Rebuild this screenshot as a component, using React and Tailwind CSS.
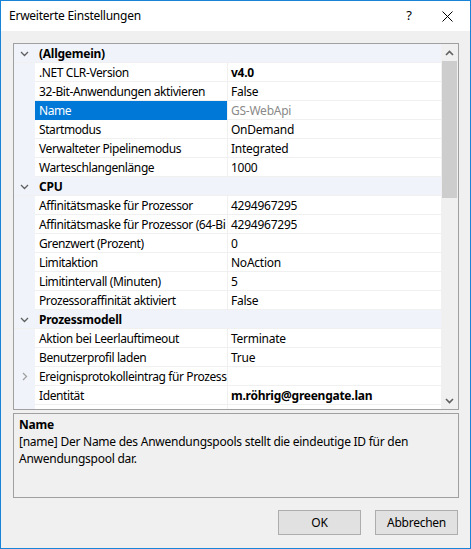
import React from 'react';

const rows = [
  { cat: '(Allgemein)' },
  { name: '.NET CLR-Version', value: 'v4.0', bold: true },
  { name: '32-Bit-Anwendungen aktivieren', value: 'False' },
  { name: 'Name', value: 'GS-WebApi', selected: true },
  { name: 'Startmodus', value: 'OnDemand' },
  { name: 'Verwalteter Pipelinemodus', value: 'Integrated' },
  { name: 'Warteschlangenlänge', value: '1000' },
  { cat: 'CPU' },
  { name: 'Affinitätsmaske für Prozessor', value: '4294967295' },
  { name: 'Affinitätsmaske für Prozessor (64-Bi', value: '4294967295' },
  { name: 'Grenzwert (Prozent)', value: '0' },
  { name: 'Limitaktion', value: 'NoAction' },
  { name: 'Limitintervall (Minuten)', value: '5' },
  { name: 'Prozessoraffinität aktiviert', value: 'False' },
  { cat: 'Prozessmodell' },
  { name: 'Aktion bei Leerlauftimeout', value: 'Terminate' },
  { name: 'Benutzerprofil laden', value: 'True' },
  { name: 'Ereignisprotokolleintrag für Prozess', value: '', expand: true },
  { name: 'Identität', value: 'm.röhrig@greengate.lan', bold: true },
  { name: '', value: '' },
];

const ChevronDown = () => (
  <svg width="9" height="6" viewBox="0 0 9 6" className="text-[#5f5f5f]">
    <path d="M1 1 L4.5 4.5 L8 1" fill="none" stroke="currentColor" strokeWidth="1.3" />
  </svg>
);

const ChevronRight = () => (
  <svg width="6" height="9" viewBox="0 0 6 9" className="text-[#a0a0a0]">
    <path d="M1 1 L4.5 4.5 L1 8" fill="none" stroke="currentColor" strokeWidth="1.3" />
  </svg>
);

const Row = ({ row }) => {
  if (row.cat) {
    return (
      <div className="flex h-[19px] shrink-0 bg-[#f0f4fa] border-b border-[#f0f0f0]">
        <div className="w-[21px] flex items-center justify-center shrink-0 pt-[1px]">
          <ChevronDown />
        </div>
        <div className="font-bold text-black leading-[17px] pt-[1px] pl-[4px]">{row.cat}</div>
      </div>
    );
  }
  return (
    <div className="flex h-[19px] shrink-0">
      <div className="w-[21px] bg-[#f0f4fa] flex items-center justify-center shrink-0">
        {row.expand && <ChevronRight />}
      </div>
      <div
        className={`w-[192px] shrink-0 overflow-hidden whitespace-nowrap pl-[4px] pt-[1px] leading-[17px] tracking-[-0.4px] border-b ${
          row.selected ? 'bg-[#0078d7] text-white border-[#0078d7]' : 'bg-white text-black border-[#f0f0f0]'
        }`}
      >
        {row.name}
      </div>
      <div className="w-px bg-[#f0f0f0] shrink-0" />
      <div
        className={`flex-1 bg-white whitespace-nowrap overflow-hidden pl-[3px] pt-[1px] leading-[17px] border-b border-[#f0f0f0] ${
          row.bold ? 'font-bold' : ''
        } ${row.selected ? 'text-[#8a8a8a]' : 'text-black'}`}
      >
        {row.value}
      </div>
    </div>
  );
};

export default function App() {
  return (
    <div
      className="w-[471px] h-[549px] border border-[#1883d7] bg-[#f0f0f0] flex flex-col text-[12px] text-black tracking-[-0.25px]"
      style={{ fontFamily: '"Noto Sans", "Open Sans", sans-serif' }}
    >
      {/* title bar */}
      <div className="h-[30px] bg-white flex items-center shrink-0">
        <div className="pl-[8px] flex-1 text-[12px]">Erweiterte Einstellungen</div>
        <div className="w-[30px] text-center text-[13px]">?</div>
        <div className="w-[46px] flex justify-center">
          <svg width="11" height="11" viewBox="0 0 11 11">
            <path d="M0.5 0.5 L10.5 10.5 M10.5 0.5 L0.5 10.5" stroke="#000" strokeWidth="1" />
          </svg>
        </div>
      </div>

      <div className="flex-1 flex flex-col pl-[12px] pt-[12px]">
        {/* property grid */}
        <div className="w-[446px] h-[367px] border border-[#a0a0a0] flex bg-white">
          <div className="w-[427px] h-[365px] overflow-hidden flex flex-col">
            {rows.map((r, i) => (
              <Row key={i} row={r} />
            ))}
          </div>
          <div className="w-[17px] bg-[#f0f0f0] flex flex-col">
            <div className="h-[17px] flex items-center justify-center">
              <svg width="9" height="6" viewBox="0 0 9 6">
                <path d="M1 5 L4.5 1.5 L8 5" fill="none" stroke="#606060" strokeWidth="1.6" />
              </svg>
            </div>
            <div className="mx-[1px] h-[137px] bg-[#cdcdcd]" />
            <div className="flex-1" />
            <div className="h-[17px] flex items-center justify-center">
              <svg width="9" height="6" viewBox="0 0 9 6">
                <path d="M1 1 L4.5 4.5 L8 1" fill="none" stroke="#606060" strokeWidth="1.6" />
              </svg>
            </div>
          </div>
        </div>

        {/* description */}
        <div className="mt-[3px] w-[446px] h-[85px] border border-[#a0a0a0] px-[5px] pt-[2px] leading-[17px]">
          <div className="font-bold">Name</div>
          <div>[name] Der Name des Anwendungspools stellt die eindeutige ID für den Anwendungspool dar.</div>
        </div>

        {/* buttons */}
        <div className="flex justify-end gap-[14px] mt-[12px] w-[445px]">
          <button className="w-[83px] h-[25px] bg-[#e1e1e1] border border-[#adadad] text-[12px]">OK</button>
          <button className="w-[83px] h-[25px] bg-[#e1e1e1] border border-[#adadad] text-[12px]">Abbrechen</button>
        </div>
      </div>
    </div>
  );
}
